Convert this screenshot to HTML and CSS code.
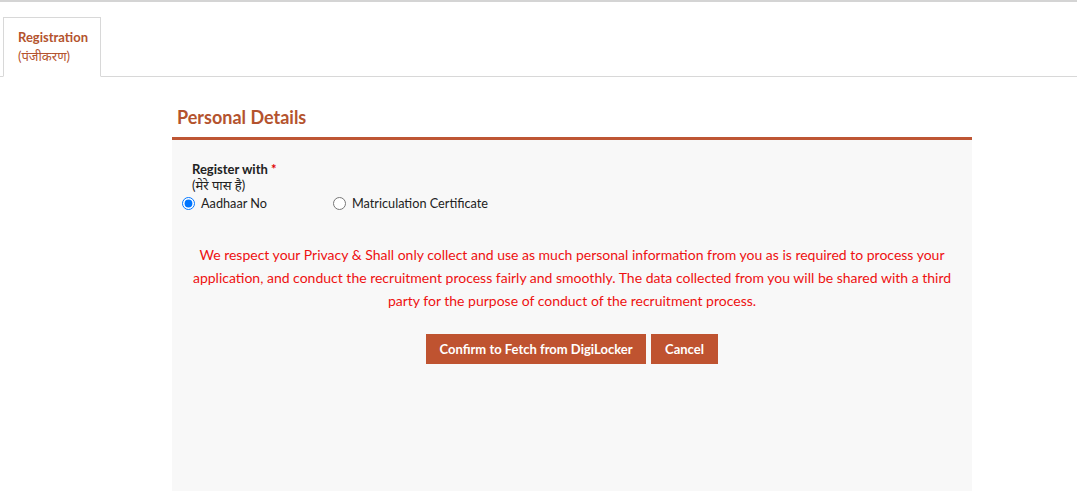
FILE: index.html
```html
<!DOCTYPE html>
<html>
  <head>
    <title>Registration</title>
    <meta charset="UTF-8">
    <link rel="stylesheet" href="styles.css">
  </head>
  <body>
    <div class="tabs">
      <div class="tab">
        <div class="tab-title">Registration</div>
        <div class="tab-sub">(पंजीकरण)</div>
      </div>
    </div>
    <div class="panel">
      <h2 class="panel-title">Personal Details</h2>
      <div class="panel-body">
        <div class="field-label">Register with <span class="req">*</span></div>
        <div class="field-sub">(मेरे पास है)</div>
        <div class="radios">
          <label class="radio first"><input type="radio" name="reg" checked> Aadhaar No</label>
          <label class="radio"><input type="radio" name="reg"> Matriculation Certificate</label>
        </div>
        <p class="notice">We respect your Privacy &amp; Shall only collect and use as much personal information from you as is required to process your application, and conduct the recruitment process fairly and smoothly. The data collected from you will be shared with a third party for the purpose of conduct of the recruitment process.</p>
        <div class="actions">
          <button type="button" class="btn btn-wide">Confirm to Fetch from DigiLocker</button>
          <button type="button" class="btn">Cancel</button>
        </div>
      </div>
    </div>
  </body>
</html>
```

FILE: styles.css
```css
body
{
  margin: 0;
  border-top: 2px solid #d4d4d4;
  font-family: Lato, "Noto Sans", "Noto Sans Devanagari", sans-serif;
  background-color: #ffffff;
  color: #222222;
}
.tabs
{
  display: flex;
  margin-top: 15px;
  padding-left: 3px;
  border-bottom: 1px solid #d8d8d8;
}
.tab
{
  box-sizing: border-box;
  width: 98px;
  height: 60px;
  margin-bottom: -1px;
  padding: 11px 0 0 14px;
  border: 1px solid #d8d8d8;
  border-bottom: 1px solid #ffffff;
  background-color: #ffffff;
}
.tab-title
{
  color: #b4532e;
  font-size: 13px;
  font-weight: bold;
  line-height: 16px;
}
.tab-sub
{
  color: #b4532e;
  font-size: 13px;
  line-height: 22px;
}
.panel
{
  width: 800px;
  margin-left: 172px;
  margin-top: 28px;
}
.panel-title
{
  margin: 0;
  padding: 0 0 8px 5px;
  color: #b4532e;
  font-size: 18px;
  line-height: 24px;
  border-bottom: 3px solid #be5634;
}
.panel-body
{
  background-color: #f8f8f8;
  height: 331px;
  padding: 20px 10px 0 10px;
}
.field-label
{
  padding-left: 10px;
  font-size: 13px;
  font-weight: bold;
  line-height: 18px;
}
.req
{
  color: #e00000;
}
.field-sub
{
  padding-left: 10px;
  font-size: 13px;
  line-height: 15px;
}
.radios
{
  display: flex;
  margin-top: 1px;
  font-size: 12.7px;
  line-height: 18px;
}
.radio
{
  display: flex;
  align-items: center;
}
.radio input
{
  margin: 0 6px 0 0;
  width: 13px;
  height: 13px;
}
.radio.first
{
  width: 151px;
}
.notice
{
  margin: 31px 0 0 0;
  padding: 0 4px;
  text-align: center;
  color: #ee1111;
  font-size: 14px;
  line-height: 23px;
}
.actions
{
  display: flex;
  justify-content: center;
  gap: 5px;
  margin-top: 22px;
}
.btn
{
  height: 30px;
  padding: 0 14px;
  border: none;
  background-color: #bf5330;
  color: #ffffff;
  font-family: Lato, "Noto Sans", sans-serif;
  font-size: 13px;
  font-weight: bold;
  white-space: nowrap;
}
.btn-wide
{
  width: 220px;
  padding: 0;
}
```
